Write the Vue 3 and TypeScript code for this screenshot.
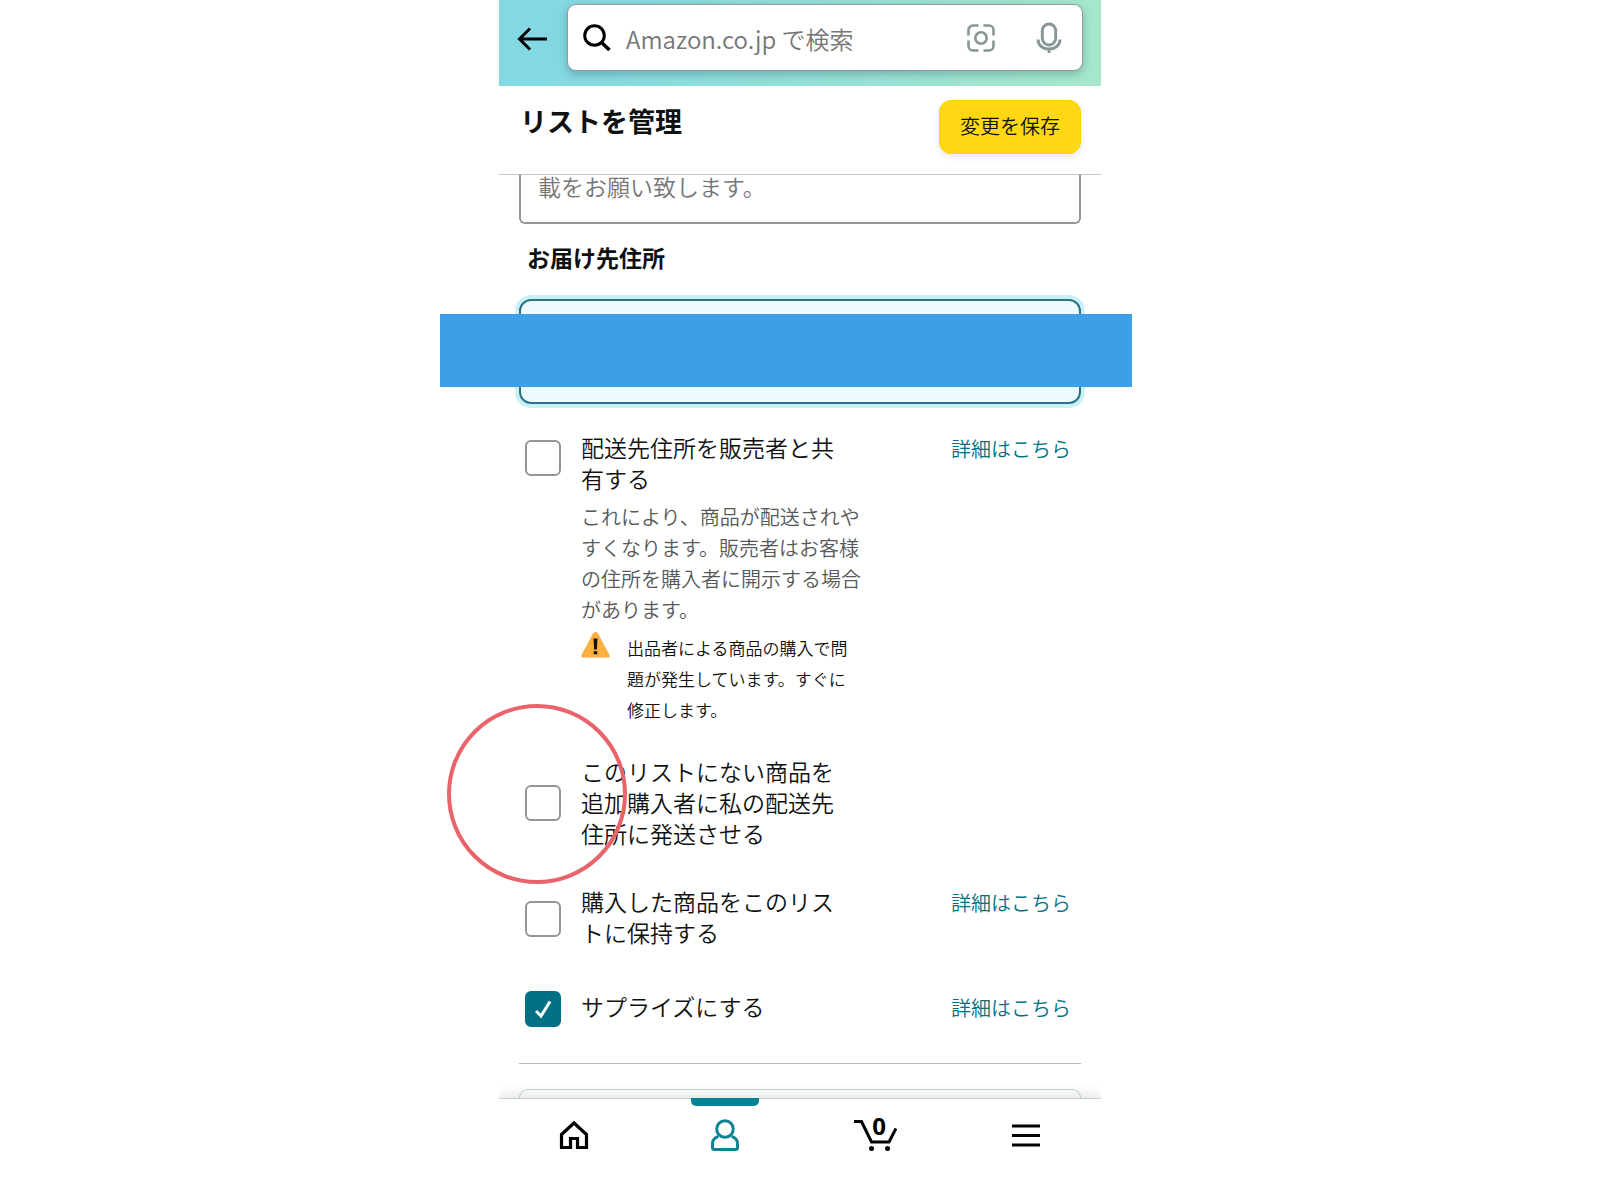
<script setup lang="ts">
import { ref } from 'vue'

interface Option {
  id: string
  label: string
  checked: boolean
  description?: string
  warning?: string
  link?: boolean
}

const query = ref('')
const note = ref('載をお願い致します。')

const options = ref<Option[]>([
  {
    id: 'share',
    label: '配送先住所を販売者と共有する',
    checked: false,
    description:
      'これにより、商品が配送されやすくなります。販売者はお客様の住所を購入者に開示する場合があります。',
    warning: '出品者による商品の購入で問題が発生しています。すぐに修正します。',
    link: true,
  },
  { id: 'extra', label: 'このリストにない商品を追加購入者に私の配送先住所に発送させる', checked: false },
  { id: 'keep', label: '購入した商品をこのリストに保持する', checked: false, link: true },
  { id: 'surprise', label: 'サプライズにする', checked: true, link: true },
])
</script>

<template>
  <div class="screen">
    <header class="top">
      <button class="back" type="button" aria-label="戻る">
        <svg width="30" height="24" viewBox="0 0 30 24" fill="none" stroke="#000" stroke-width="3">
          <path d="M13 1.5 2.5 12 13 22.5M2.5 12H30" />
        </svg>
      </button>
      <form class="search" role="search" @submit.prevent>
        <svg width="28" height="28" viewBox="0 0 28 28" fill="none" stroke="#000" stroke-width="3">
          <circle cx="11.5" cy="11.5" r="9.8" />
          <path d="m18.500 18.500 8 7.500" stroke-width="3.600" />
        </svg>
        <input v-model="query" type="text" placeholder="Amazon.co.jp で検索" aria-label="検索" />
        <button type="button" aria-label="カメラ">
          <svg width="28" height="28" viewBox="0 0 28 28" fill="none" stroke="#879596" stroke-width="2.6">
            <path d="M11.500 1.500H6A4.500 4.500 0 0 0 1.500 6v5.500M16.500 1.500H22A4.500 4.500 0 0 1 26.500 6v5.500M26.500 16.500V22a4.500 4.500 0 0 1-4.500 4.500h-5.500M11.500 26.500H6A4.500 4.500 0 0 1 1.500 22v-5.500" />
            <circle cx="14" cy="14" r="5.700" />
          </svg>
        </button>
        <button type="button" aria-label="音声">
          <svg width="26" height="32" viewBox="0 0 26 32" fill="none" stroke="#879596" stroke-width="2.9">
            <rect x="6.300" y="2" width="13.400" height="21" rx="6.700" />
            <path d="M2 17.500c0 6 5 9.500 11 9.500s11-3.500 11-9.500M13 27v4" />
          </svg>
        </button>
      </form>
    </header>

    <div class="title-bar">
      <h1>リストを管理</h1>
      <button type="button" class="save">変更を保存</button>
    </div>

    <main class="content">
      <textarea v-model="note" class="note" rows="1" aria-label="説明"></textarea>

      <h2>お届け先住所</h2>
      <div class="address"><div class="redaction"></div></div>

      <div v-for="o in options" :key="o.id" class="option" :class="o.id">
        <span class="check">
          <input :id="o.id" v-model="o.checked" type="checkbox" />
          <svg v-if="o.checked" width="18" height="20" viewBox="0 0 18 20" fill="none" stroke="#fff" stroke-width="3">
            <path d="m2 12 5 5L16 2.500" />
          </svg>
        </span>
        <div class="body">
          <label :for="o.id">{{ o.label }}</label>
          <p v-if="o.description" class="description">{{ o.description }}</p>
          <div v-if="o.warning" class="warning">
            <svg width="29" height="26" viewBox="0 0 29 26">
              <path d="M12.200 1q2.300-1.800 4.600 0L28.500 23q.8 2.500-1 2.500h-26q-1.800 0-1-2.500z" fill="#fbb040" />
              <path d="M12.500 6.500h4l-.6 11h-2.800zM12.700 19.300h3.600v3h-3.600z" fill="#111" />
            </svg>
            <p>{{ o.warning }}</p>
          </div>
        </div>
        <a v-if="o.link" href="#">詳細はこちら</a>
        <span v-if="o.id === 'extra'" class="ring"></span>
      </div>

      <hr />
      <div class="next-card"></div>
    </main>

    <nav class="tabs">
      <a href="#" aria-label="ホーム">
        <svg width="30" height="32" viewBox="0 0 30 32" fill="none" stroke="#000" stroke-width="3.200">
          <path d="M2.500 15.500 15 4l12.500 11.500v13H18.500V19.500h-7v9h-9z" />
        </svg>
      </a>
      <a href="#" class="active" aria-label="アカウント">
        <svg width="30" height="32" viewBox="0 0 30 32" fill="none" stroke="#0f8494" stroke-width="3">
          <circle cx="15" cy="10" r="8.300" />
          <path d="M8.500 17.500C4.500 18.500 2.500 21.500 2.500 25v3.500q0 2 2 2h21q2 0 2-2V25c0-3.500-2-6.500-6-7.500" />
        </svg>
      </a>
      <a href="#" class="cart" aria-label="カート">
        <svg width="44" height="32" viewBox="0 0 44 32" fill="none" stroke="#000" stroke-width="3">
          <path d="M1 2.500h7.500l10 20.500H36l7-13.500" />
          <circle cx="18.500" cy="29.500" r="2.500" fill="#000" stroke="none" />
          <circle cx="34.500" cy="29.500" r="2.500" fill="#000" stroke="none" />
        </svg>
        <span class="count">0</span>
      </a>
      <a href="#" aria-label="メニュー">
        <svg width="28" height="24" viewBox="0 0 28 24" stroke="#000" stroke-width="3">
          <path d="M0 3h28M0 12.500h28M0 22h28" />
        </svg>
      </a>
    </nav>
  </div>
</template>

<style>
body {
  margin: 0;
  background: #fff;
}
</style>

<style scoped>
* {
  box-sizing: border-box;
}
.screen {
  position: relative;
  max-width: 602px;
  margin: 0 auto;
  color: #0f1111;
  font-family: 'Noto Sans CJK JP', sans-serif;
  font-size: 23px;
  font-weight: 350;
  line-height: 31px;
}
button,
input,
textarea {
  font: inherit;
  color: inherit;
}
button {
  padding: 0;
  border: 0;
  background: none;
}
svg {
  display: block;
  flex: none;
}
h1,
h2,
p {
  margin: 0;
}
a {
  color: #007185;
  text-decoration: none;
}
.top {
  display: flex;
  align-items: flex-start;
  height: 86px;
  padding: 4px 18px 0 18px;
  background: linear-gradient(100deg, #84d8e3 10%, #a6e7cc 95%);
}
.back {
  flex: none;
  width: 50px;
  height: 70px;
}
.search {
  display: flex;
  flex: 1;
  align-items: center;
  min-width: 0;
  height: 67px;
  padding: 0 20px 0 15px;
  border: 1px solid #8c9c9f;
  border-radius: 9px;
  background: #fff;
  box-shadow: 0 3px 8px rgba(15, 60, 70, 0.3);
}
.search input {
  flex: 1;
  min-width: 0;
  height: 44px;
  margin-left: 15px;
  padding: 2px 0 0;
  border: 0;
  outline: 0;
  background: none;
  font-size: 24px;
  line-height: 40px;
}
.search input::placeholder {
  color: #767676;
  opacity: 1;
}
.search button + button {
  margin-left: 41px;
}
.title-bar {
  display: flex;
  align-items: flex-start;
  justify-content: space-between;
  height: 89px;
  padding: 14px 20px 0 21px;
  border-bottom: 1px solid #c4c6c6;
}
h1 {
  margin-top: 5px;
  font-size: 27px;
}
.save {
  width: 142px;
  height: 54px;
  padding-bottom: 3px;
  border: 1px solid #fcd200;
  border-radius: 12px;
  background: #ffd814;
  box-shadow: 0 3px 7px rgba(15, 17, 17, 0.1);
  font-size: 20px;
}
.content {
  padding: 0 20px;
}
.note {
  display: block;
  width: 100%;
  height: 49px;
  padding: 0 17px;
  overflow: hidden;
  border: 2px solid #929696;
  border-top: 0;
  border-radius: 0 0 6px 6px;
  outline: 0;
  resize: none;
  color: #767676;
  line-height: 22px;
}
h2 {
  margin: 18px 8px 26px;
  font-size: 23px;
}
.address {
  position: relative;
  height: 105px;
  border: 2px solid #2a7484;
  border-radius: 12px;
  background: #edfdff;
  box-shadow: 0 0 0 4px #c8f0f6;
}
.redaction {
  position: absolute;
  top: 13px;
  right: -53px;
  left: -81px;
  height: 73px;
  background: #3d9fe8;
}
.option {
  position: relative;
  display: flex;
  align-items: flex-start;
  gap: 20px;
  padding: 0 10px 0 6px;
}
.share {
  margin-top: 28px;
}
.extra {
  margin-top: 31px;
}
.keep {
  margin-top: 37px;
}
.surprise {
  margin-top: 43px;
}
.check {
  display: grid;
  flex: none;
  place-items: center;
  align-self: center;
  width: 36px;
  height: 36px;
}
.share .check {
  align-self: flex-start;
  margin-top: 8px;
}
.keep .check {
  align-self: flex-start;
  margin-top: 15px;
}
.check > * {
  grid-area: 1 / 1;
}
.check svg {
  pointer-events: none;
}
.check input {
  width: 36px;
  height: 36px;
  margin: 0;
  border: 2px solid #929696;
  border-radius: 6px;
  appearance: none;
  background: #fff;
}
.check input:checked {
  border-color: #007185;
  background: #007185;
}
.body {
  width: 283px;
}
label {
  display: block;
  max-width: 260px;
}
.description {
  margin-top: 7px;
  color: #565959;
  font-size: 20px;
}
.warning {
  display: flex;
  align-items: flex-start;
  gap: 17px;
  margin-top: 7px;
  padding-right: 8px;
  font-size: 17px;
}
.option > a {
  margin-left: auto;
  padding-top: 1px;
  font-size: 20px;
}
.ring {
  position: absolute;
  top: -52px;
  left: -72px;
  width: 180px;
  height: 180px;
  border: 4px solid #e9636a;
  border-radius: 50%;
  pointer-events: none;
}
hr {
  height: 1px;
  margin: 36px 0 25px;
  border: 0;
  background: #b4bbbb;
}
.next-card {
  height: 9px;
  border: 1px solid #c5cccc;
  border-bottom: 0;
  border-radius: 12px 12px 0 0;
}
.tabs {
  position: relative;
  display: flex;
  height: 72px;
  border-top: 1px solid #c5d0d2;
  background: #fff;
  box-shadow: 0 -2px 12px rgba(15, 50, 60, 0.15);
  clip-path: inset(-16px 0 0 0);
}
.tabs a {
  position: relative;
  display: flex;
  flex: 1;
  align-items: center;
  justify-content: center;
}
.active::before {
  position: absolute;
  top: -1px;
  width: 68px;
  height: 8px;
  border-radius: 0 0 5px 5px;
  background: #048296;
  content: '';
}
.count {
  position: absolute;
  top: 11px;
  left: 50%;
  margin-left: -3px;
  color: #000;
  font-family: 'Noto Sans', sans-serif;
  font-size: 24px;
  font-weight: 700;
}
</style>
